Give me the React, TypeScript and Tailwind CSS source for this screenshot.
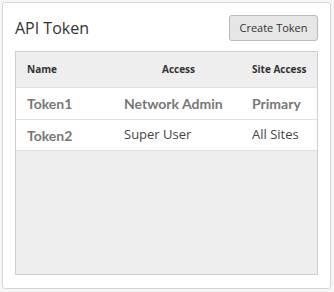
import React from "react";

const rows = [
  { name: "Token1", access: "Network Admin", site: "Primary", bold: true },
  { name: "Token2", access: "Super User", site: "All Sites", bold: false },
];

const App: React.FC = () => {
  return (
    <div className="w-[334px] h-[292px] bg-[#f6f6f6] p-[2px] font-['Open_Sans',sans-serif]">
      <div className="h-[287px] w-[329px] bg-white border border-[#d6d6d6] rounded-[3px] px-3 pt-3 pb-[13px] flex flex-col">
        <div className="flex items-center justify-between h-[26px] mb-[10px]">
          <h2 className="text-[16px] text-[#333] leading-none -mt-[1px]">API Token</h2>
          <button className="h-[26px] w-[89px] bg-[#e6e6e6] border border-[#b9b9b9] rounded-[3px] text-[11px] text-[#333]">
            Create Token
          </button>
        </div>
        <div className="flex-1 bg-[#eeeeee] border border-[#cfcfcf] flex flex-col">
          <div className="grid grid-cols-[97px_128px_1fr] items-center h-[35px] px-[11px] text-[10px] font-bold text-[#333] whitespace-nowrap">
            <span>Name</span>
            <span className="pl-[38px]">Access</span>
            <span>Site Access</span>
          </div>
          {rows.map((r) => (
            <div
              key={r.name}
              className="grid grid-cols-[97px_128px_1fr] items-center h-[32px] px-[11px] bg-white border-t border-[#e0e0e0] last:border-b whitespace-nowrap"
            >
              <span className="font-['Lato',sans-serif] font-bold text-[14px] text-[#777]">{r.name}</span>
              {r.bold ? (
                <span className="font-['Lato',sans-serif] font-bold text-[14px] text-[#777]">{r.access}</span>
              ) : (
                <span className="text-[13px] text-[#444]">{r.access}</span>
              )}
              {r.bold ? (
                <span className="font-['Lato',sans-serif] font-bold text-[14px] text-[#777]">{r.site}</span>
              ) : (
                <span className="text-[13px] text-[#444]">{r.site}</span>
              )}
            </div>
          ))}
        </div>
      </div>
    </div>
  );
};

export default App;
